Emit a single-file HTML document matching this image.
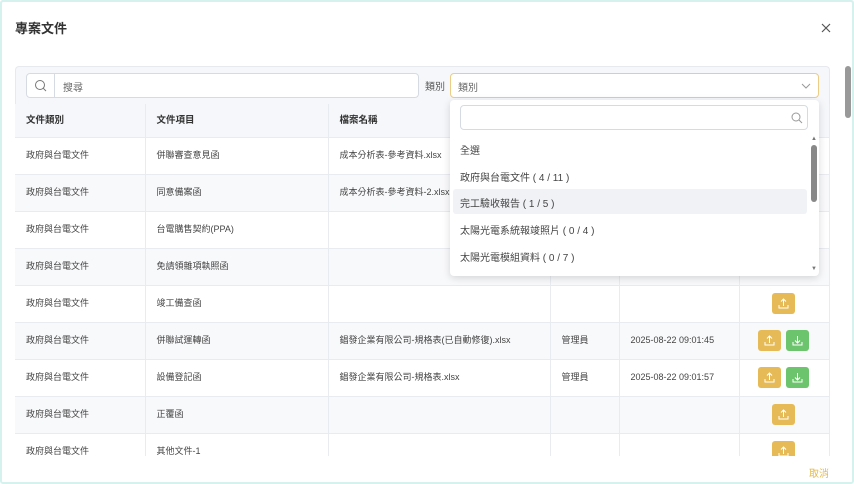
<!DOCTYPE html>
<html><head><meta charset="utf-8"><style>
*{box-sizing:border-box;margin:0;padding:0}
body{width:854px;height:484px;overflow:hidden;background:#fff;font-family:"Liberation Sans","Noto Sans CJK TC",sans-serif;color:#333;position:relative}
.frame{position:absolute;left:0;top:0;width:854px;height:484px;border:2px solid #d6f2ef;border-radius:3px}
.title{position:absolute;left:15px;top:18px;font-size:13px;font-weight:bold;color:#333}
.close{position:absolute;left:821px;top:23px}
.panel{position:absolute;left:15px;top:66px;width:815px;height:390px;background:#f5f7fa;border:1px solid #e6e9ee;border-bottom:none;border-radius:4px 4px 0 0;overflow:hidden}
.search{position:absolute;left:26px;top:73px;width:393px;height:25px;background:#fff;border:1px solid #d6dbe3;border-radius:4px}
.search .ic{position:absolute;left:0;top:0;width:28px;height:23px;border-right:1px solid #d6dbe3}
.search span{position:absolute;left:36px;top:5px;font-size:10px;color:#666}
.lbl{position:absolute;left:425px;top:78px;font-size:10px;color:#555}
.sel{position:absolute;left:450px;top:73px;width:369px;height:25px;background:#fff;border:1px solid #ebcd85;border-radius:4px}
.sel span{position:absolute;left:7px;top:5px;font-size:10px;color:#666}
table{position:absolute;left:15px;top:104px;border-collapse:collapse;width:815px;font-size:9px;color:#444}
td,th{border-right:1px solid #e8ebf0;border-bottom:1px solid #e8ebf0;text-align:left;padding-left:11px;height:37px;font-weight:normal;padding-bottom:2px}
th{height:33px;font-weight:bold;background:#f5f7fa;color:#333;font-size:9.5px}
tr:nth-child(odd) td{background:#f8f9fb}
tr.w td{background:#fff}
.b{display:inline-block;width:23px;height:21px;border-radius:3px;vertical-align:middle;position:relative}
.y{background:#e6bb57}.g{background:#6cc46c;margin-left:5px}
.b svg{position:absolute;left:6px;top:5px}
.dd{position:absolute;left:450px;top:100px;width:369px;height:176px;background:#fff;border-radius:4px;box-shadow:0 2px 8px rgba(0,0,0,.15)}
.dd .in{position:absolute;left:10px;top:5px;width:348px;height:25px;border:1px solid #d6dbe3;border-radius:4px}
.it{position:absolute;left:10px;font-size:10px;color:#444}
.hl{position:absolute;left:3px;top:89px;width:354px;height:25px;background:#f0f2f6;border-radius:3px}
.sb{position:absolute;left:361px;top:45px;width:6px;height:57px;background:#888;border-radius:3px}
.psb{position:absolute;left:845px;top:66px;width:6px;height:52px;background:#999;border-radius:3px}
.cancel{position:absolute;left:809px;top:465px;font-size:10px;color:#e6b94a}
</style></head><body>
<div class="frame"></div>
<div class="title">專案文件</div>
<svg class="close" width="10" height="10"><path d="M1 1L9 9M9 1L1 9" stroke="#555" stroke-width="1.2"/></svg>
<div class="panel"></div>
<div class="search"><div class="ic"><svg width="28" height="23"><circle cx="13" cy="11" r="4.5" fill="none" stroke="#777" stroke-width="1"/><line x1="16.3" y1="14.3" x2="19" y2="17" stroke="#777"/></svg></div><span>搜尋</span></div>
<div class="lbl">類別</div>
<div class="sel"><span>類別</span><svg style="position:absolute;left:350px;top:8px" width="10" height="8"><path d="M1 2 L5 6 L9 2" fill="none" stroke="#999"/></svg></div>
<table>
<tr><th style="width:130px">文件類別</th><th style="width:183px">文件項目</th><th style="width:222px">檔案名稱</th><th style="width:69px"></th><th style="width:120px"></th><th></th></tr>
<tr class="w"><td>政府與台電文件</td><td>併聯審查意見函</td><td>成本分析表-參考資料.xlsx</td><td></td><td></td><td></td></tr>
<tr><td>政府與台電文件</td><td>同意備案函</td><td>成本分析表-參考資料-2.xlsx</td><td></td><td></td><td></td></tr>
<tr class="w"><td>政府與台電文件</td><td>台電購售契約(PPA)</td><td></td><td></td><td></td><td></td></tr>
<tr><td>政府與台電文件</td><td>免請領雜項執照函</td><td></td><td></td><td></td><td></td></tr>
<tr class="w"><td>政府與台電文件</td><td>竣工備查函</td><td></td><td></td><td></td><td style="text-align:center;padding:0 2px 0 0"><span class="b y"><svg width="11" height="11"><path d="M5.5 8V1M3 3.5L5.5 1 8 3.5M1 7v3h9V7" fill="none" stroke="#fff"/></svg></span></td></tr>
<tr><td>政府與台電文件</td><td>併聯試運轉函</td><td>錩發企業有限公司-規格表(已自動修復).xlsx</td><td>管理員</td><td>2025-08-22 09:01:45</td><td style="text-align:center;padding:0 2px 0 0"><span class="b y"><svg width="11" height="11"><path d="M5.5 8V1M3 3.5L5.5 1 8 3.5M1 7v3h9V7" fill="none" stroke="#fff"/></svg></span><span class="b g"><svg width="11" height="11"><path d="M5.5 1V8M3 5.5L5.5 8 8 5.5M1 7v3h9V7" fill="none" stroke="#fff"/></svg></span></td></tr>
<tr class="w"><td>政府與台電文件</td><td>設備登記函</td><td>錩發企業有限公司-規格表.xlsx</td><td>管理員</td><td>2025-08-22 09:01:57</td><td style="text-align:center;padding:0 2px 0 0"><span class="b y"><svg width="11" height="11"><path d="M5.5 8V1M3 3.5L5.5 1 8 3.5M1 7v3h9V7" fill="none" stroke="#fff"/></svg></span><span class="b g"><svg width="11" height="11"><path d="M5.5 1V8M3 5.5L5.5 8 8 5.5M1 7v3h9V7" fill="none" stroke="#fff"/></svg></span></td></tr>
<tr><td>政府與台電文件</td><td>正覆函</td><td></td><td></td><td></td><td style="text-align:center;padding:0 2px 0 0"><span class="b y"><svg width="11" height="11"><path d="M5.5 8V1M3 3.5L5.5 1 8 3.5M1 7v3h9V7" fill="none" stroke="#fff"/></svg></span></td></tr>
<tr class="w"><td>政府與台電文件</td><td>其他文件-1</td><td></td><td></td><td></td><td style="text-align:center;padding:0 2px 0 0"><span class="b y"><svg width="11" height="11"><path d="M5.5 8V1M3 3.5L5.5 1 8 3.5M1 7v3h9V7" fill="none" stroke="#fff"/></svg></span></td></tr>
</table>
<div style="position:absolute;left:0;top:456px;width:854px;height:28px;background:#fff"></div>
<div class="frame"></div>
<div class="dd">
<div class="in"><svg style="position:absolute;left:330px;top:6px" width="12" height="12"><circle cx="5" cy="5" r="4" fill="none" stroke="#999"/><line x1="8" y1="8" x2="11" y2="11" stroke="#999"/></svg></div>
<div class="hl"></div>
<div class="it" style="top:42px">全選</div>
<div class="it" style="top:69px">政府與台電文件 ( 4 / 11 )</div>
<div class="it" style="top:95px">完工驗收報告 ( 1 / 5 )</div>
<div class="it" style="top:122px">太陽光電系統報竣照片 ( 0 / 4 )</div>
<div class="it" style="top:149px">太陽光電模組資料 ( 0 / 7 )</div>
<div class="sb"></div>
<div style="position:absolute;left:361px;top:36px;font-size:6px;color:#777">▲</div>
<div style="position:absolute;left:361px;top:166px;font-size:6px;color:#777">▼</div>
</div>
<div class="psb"></div>
<div class="cancel">取消</div>
</body></html>
